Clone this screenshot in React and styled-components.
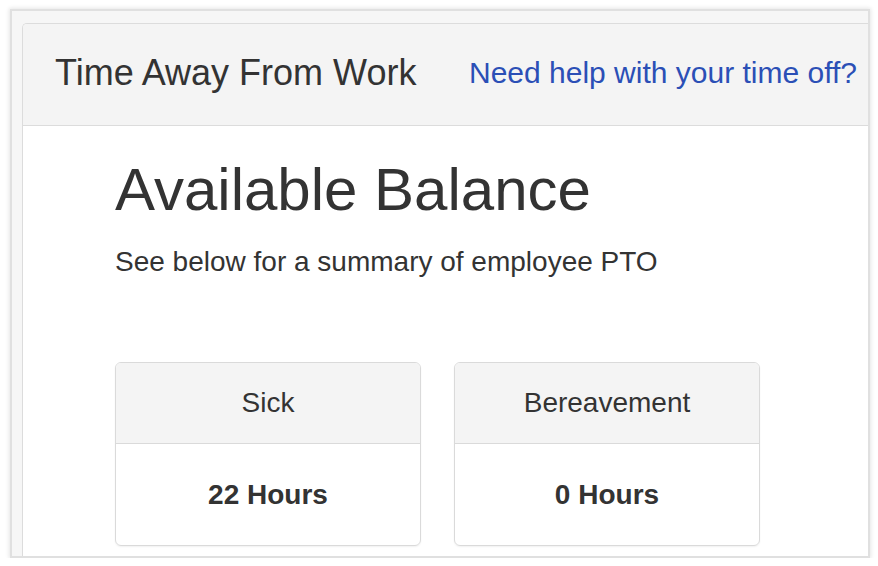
import styled, { createGlobalStyle } from "styled-components";

const GlobalStyle = createGlobalStyle`
  html, body {
    margin: 0;
    padding: 0;
    background: #ffffff;
  }
  body {
    font-family: "Liberation Sans", Arial, Helvetica, sans-serif;
    color: #333333;
  }
`;

const Frame = styled.div`
  box-sizing: border-box;
  width: 860px;
  height: 549px;
  margin: 9px 0 0 10px;
  padding: 12px 0 0 10px;
  border: 2px solid #e0e0e0;
  box-shadow: 0 0 4px 1px rgba(0, 0, 0, 0.1);
  background: #f6f6f6;
  overflow: hidden;
  display: flex;
`;

const Panel = styled.div`
  flex: 1;
  display: flex;
  flex-direction: column;
  background: #ffffff;
  border: 1px solid #dcdcdc;
  border-right: none;
  border-bottom: none;
  border-top-left-radius: 5px;
  overflow: hidden;
`;

const PanelHeader = styled.div`
  box-sizing: border-box;
  height: 102px;
  flex-shrink: 0;
  display: flex;
  align-items: center;
  justify-content: space-between;
  padding: 0 11px 4px 32px;
  background: #f4f4f4;
  border-bottom: 1px solid #dcdcdc;
`;

const PanelTitle = styled.h2`
  margin: 0;
  font-size: 36px;
  font-weight: 400;
  color: #333333;
  white-space: nowrap;
`;

const HelpLink = styled.a`
  font-size: 30px;
  color: #2b4fb6;
  text-decoration: none;
  white-space: nowrap;
`;

const PanelBody = styled.div`
  padding: 31px 0 0 92px;
`;

const Heading = styled.h1`
  margin: 0;
  font-size: 60px;
  line-height: 66px;
  font-weight: 400;
  color: #333333;
`;

const Subtitle = styled.p`
  margin: 22px 0 0;
  font-size: 28px;
  line-height: 34px;
  color: #333333;
`;

const CardRow = styled.div`
  display: flex;
  gap: 33px;
  margin-top: 83px;
`;

const Card = styled.div`
  box-sizing: border-box;
  width: 306px;
  border: 1px solid #dadada;
  border-radius: 6px;
  overflow: hidden;
  box-shadow: 0 1px 2px rgba(0, 0, 0, 0.06);
  display: flex;
  flex-direction: column;
`;

const CardHeader = styled.div`
  height: 80px;
  display: flex;
  align-items: center;
  justify-content: center;
  background: #f4f4f4;
  border-bottom: 1px solid #dadada;
  font-size: 28px;
  color: #333333;
`;

const CardValue = styled.div`
  height: 101px;
  display: flex;
  align-items: center;
  justify-content: center;
  font-size: 28px;
  font-weight: 700;
  color: #333333;
`;

const balances = [
  { type: "Sick", hours: 22 },
  { type: "Bereavement", hours: 0 },
];

export default function App() {
  return (
    <>
      <GlobalStyle />
      <Frame>
        <Panel>
          <PanelHeader>
            <PanelTitle>Time Away From Work</PanelTitle>
            <HelpLink href="#">Need help with your time off?</HelpLink>
          </PanelHeader>
          <PanelBody>
            <Heading>Available Balance</Heading>
            <Subtitle>See below for a summary of employee PTO</Subtitle>
            <CardRow>
              {balances.map((item) => (
                <Card key={item.type}>
                  <CardHeader>{item.type}</CardHeader>
                  <CardValue>{item.hours} Hours</CardValue>
                </Card>
              ))}
            </CardRow>
          </PanelBody>
        </Panel>
      </Frame>
    </>
  );
}
